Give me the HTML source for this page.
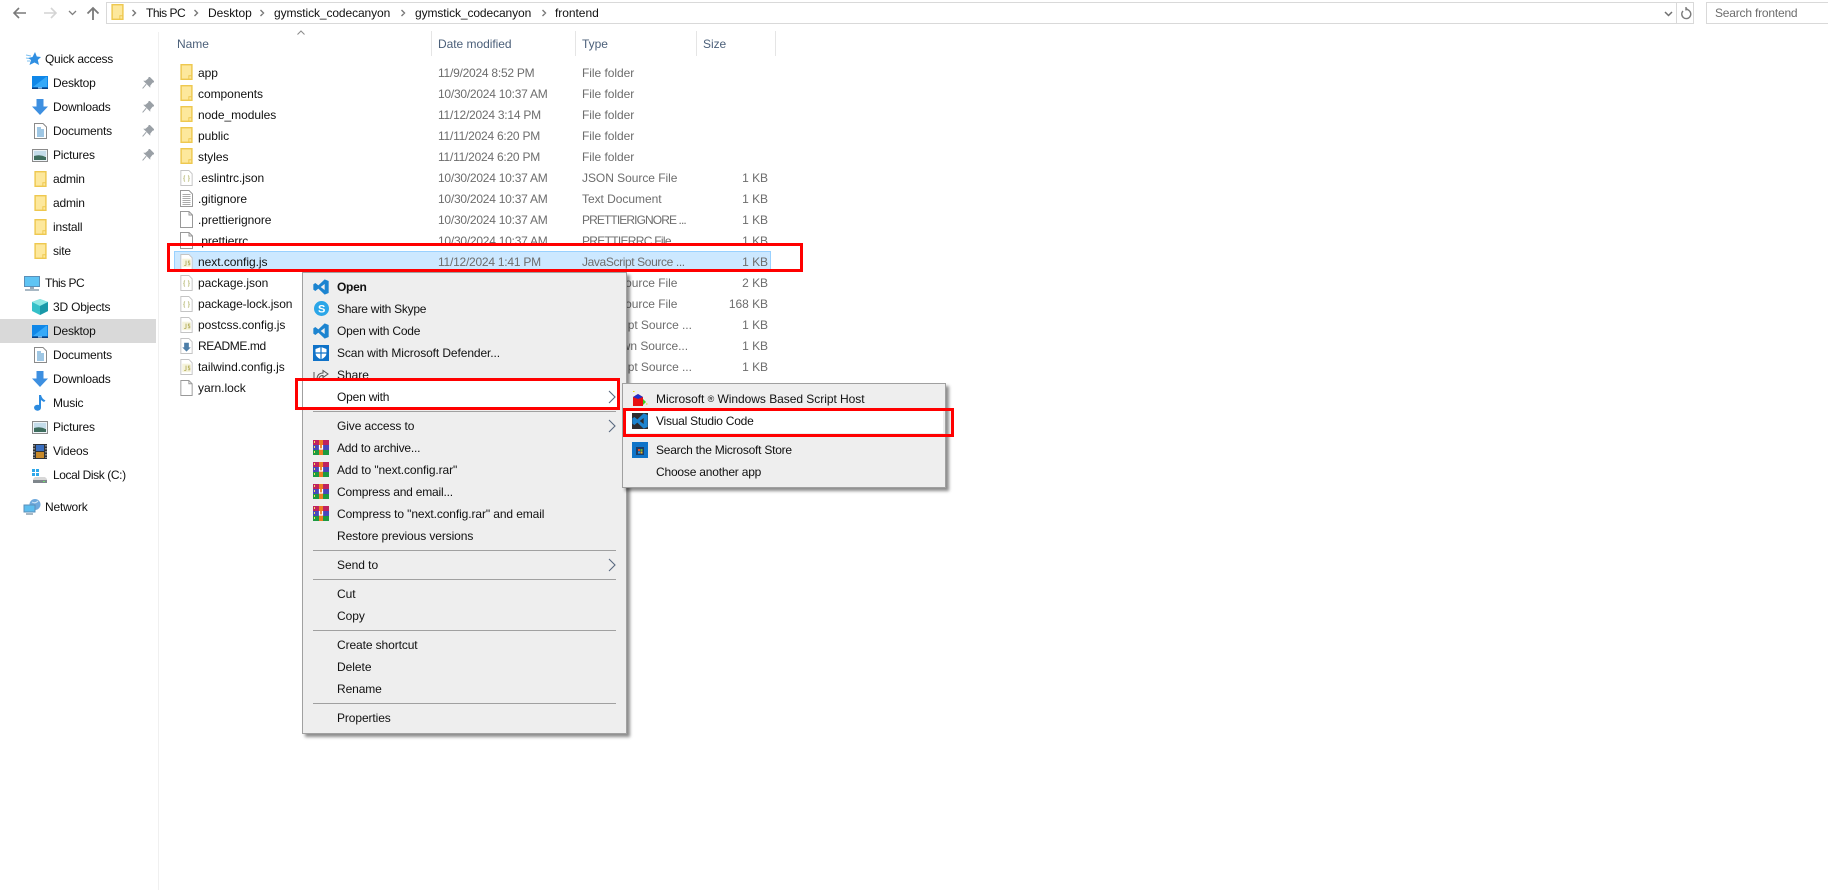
<!DOCTYPE html>
<html><head><meta charset="utf-8"><title>frontend</title>
<style>
html,body{margin:0;padding:0;background:#fff;}
#r{position:relative;width:1828px;height:890px;overflow:hidden;background:#fff;font:12px/20px "Liberation Sans",sans-serif;color:#111;}
#r>*{position:absolute;}
.t{position:absolute;white-space:nowrap;height:20px;line-height:20px;letter-spacing:-.04px;}
.g{color:#6d6d6d;}
.d{letter-spacing:-.24px;}
.s{color:#6d6d6d;text-align:right;width:60px;left:708px;}
.h{color:#4c607a;}
.n{letter-spacing:-.2px;}
.m{position:absolute;background:#eee;border:1px solid #a0a0a0;box-shadow:3px 3px 3px rgba(0,0,0,.45);}
.sep{position:absolute;height:1px;background:#a0a0a0;}
.red{position:absolute;box-sizing:border-box;border:3px solid #f00;}
svg{position:absolute;overflow:visible;}
</style></head><body><div id="r">
<svg width="0" height="0" style="left:0;top:0">
<defs>
<symbol id="folder" viewBox="0 0 13 17"><rect x=".75" y=".75" width="11.500" height="15.500" fill="#fde89c" stroke="#eec84f" stroke-width="1.500"/><path d="M9 16V12.500H12" fill="none" stroke="#eec84f"/></symbol>
<symbol id="file" viewBox="0 0 13 17"><path d="M.5.5H9L12.500 4V16.500H.5Z" fill="#fff" stroke="#999"/><path d="M9 .5V4H12.500" fill="none" stroke="#999"/></symbol>
<symbol id="json" viewBox="0 0 13 17"><path d="M.5.5H9L12.500 4V16.500H.5Z" fill="#fff" stroke="#c4c4c4"/><path d="M5 6Q4 6 4 7.500V8.500L3.500 9 4 9.500V11Q4 12 5 12M8 6Q9 6 9 7.500V8.500L9.500 9 9 9.500V11Q9 12 8 12" fill="none" stroke="#c2c48a"/></symbol>
<symbol id="js" viewBox="0 0 13 17"><path d="M.5.5H9L12.500 4V16.500H.5Z" fill="#fff" stroke="#c4c4c4"/><rect x="2" y="5" width="9" height="9" fill="#f5f3dc"/><path d="M6 7V11.500Q6 12.500 4 12M10.500 7.500H8.500V9.500H10V11.500H8" fill="none" stroke="#b8b060" stroke-width="1"/></symbol>
<symbol id="txt" viewBox="0 0 13 17"><path d="M.5.5H9L12.500 4V16.500H.5Z" fill="#fff" stroke="#999"/><path d="M2.500 4.500H10.500M2.500 6.500H10.500M2.500 8.500H10.500M2.500 10.500H10.500M2.500 12.500H10.500M2.500 14.500H10.500" stroke="#aaa"/></symbol>
<symbol id="md" viewBox="0 0 13 17"><path d="M.5.5H9L12.500 4V16.500H.5Z" fill="#fff" stroke="#c4c4c4"/><path d="M4 5H9V10L11 10 6.500 14.500 2 10H4Z" fill="#4d7ea8"/></symbol>
<symbol id="pin" viewBox="0 0 10 10"><path d="M6 0 10 4 8.500 4.500 6.500 7 6.500 8 2 3.500 3 3.500 5.500 1.500Z M3.500 6 .5 9.500" fill="#9aa0a6" stroke="#9aa0a6" stroke-width=".8"/></symbol>
<symbol id="desk" viewBox="0 0 16 14"><rect width="16" height="13" fill="#0f87e8"/><path d="M1 11 14 1H15V11Z" fill="#36a9f8"/><rect y="11.500" width="16" height="1.500" fill="#0b3f80"/><rect x="6" y="11.500" width="4" height="1" fill="#bfe0fb"/></symbol>
<symbol id="down" viewBox="0 0 16 16"><path d="M4.500 0H11.500V7.500H16L8 16 0 7.500H4.500Z" fill="#3d8fe0"/></symbol>
<symbol id="docs" viewBox="0 0 13 16"><path d="M.5.5H9L12.500 4V15.500H.5Z" fill="#fff" stroke="#8a8a8a"/><path d="M3 5H7M3 7H10M3 9H10M3 11H10M3 13H10" stroke="#3f8fc9"/></symbol>
<symbol id="pics" viewBox="0 0 16 13"><rect x=".5" y=".5" width="15" height="12" fill="#eef4f8" stroke="#8a8a8a"/><rect x="2" y="2" width="12" height="5" fill="#c4dcea"/><path d="M2 7Q8 5 14 8V11H2Z" fill="#3e6d5e"/></symbol>
<symbol id="vsc" viewBox="0 0 24 24"><path fill-rule="evenodd" d="M17.500.5 8 9.500 3.500 6 .5 8V16L3.500 18 8 14.500 17.500 23.500 23.500 21V3ZM17.500 7.500V16.500L11.500 12Z" fill="#1c84d0"/></symbol>
<symbol id="rar" viewBox="0 0 16 15"><rect width="16" height="5" fill="#c0225e"/><rect y="5" width="16" height="5" fill="#4847bb"/><rect y="10" width="16" height="5" fill="#1c9a40"/><rect x="6" width="4" height="15" fill="#ee7c22"/><rect x="1" y="1" width="1" height="2" fill="#f5e25a"/><rect x="1" y="6" width="1" height="2" fill="#f5e25a"/><rect x="1" y="11" width="1" height="2" fill="#f5e25a"/><path d="M6.500 5V9H9.500V5" fill="none" stroke="#fff" stroke-width="1.200"/></symbol>
</defs></svg>

<!-- toolbar -->
<svg style="left:12px;top:6px" width="16" height="14"><path d="M14 7H2M7 2 2 7 7 12" fill="none" stroke="#7a7a7a" stroke-width="1.600"/></svg>
<svg style="left:42px;top:6px" width="16" height="14"><path d="M2 7H14M9 2 14 7 9 12" fill="none" stroke="#d4d4d4" stroke-width="1.600"/></svg>
<svg style="left:68px;top:10px" width="10" height="6"><path d="M1 1 4.500 4.500 8 1" fill="none" stroke="#808080" stroke-width="1.300"/></svg>
<svg style="left:86px;top:6px" width="14" height="15"><path d="M7 14V2M1.500 7.500 7 2 12.500 7.500" fill="none" stroke="#7a7a7a" stroke-width="1.800"/></svg>
<div style="left:106px;top:2px;width:1588px;height:22px;box-sizing:border-box;border:1px solid #d9d9d9"></div>
<div style="left:1676px;top:3px;width:1px;height:20px;background:#d9d9d9"></div>
<svg style="left:111px;top:4px" width="13" height="16"><use href="#folder" width="13" height="16"/></svg>
<span class="t n" style="left:146px;top:3px;letter-spacing:-.5px">This PC</span>
<span class="t" style="left:208px;top:3px">Desktop</span>
<span class="t" style="left:274px;top:3px;letter-spacing:-.1px">gymstick_codecanyon</span>
<span class="t" style="left:415px;top:3px;letter-spacing:-.1px">gymstick_codecanyon</span>
<span class="t" style="left:555px;top:3px">frontend</span>
<svg style="left:0;top:0" width="600" height="26"><path d="M132.500 10 135.500 13 132.500 16M194.500 10 197.500 13 194.500 16M260.500 10 263.500 13 260.500 16M401.500 10 404.500 13 401.500 16M542.500 10 545.500 13 542.500 16" fill="none" stroke="#777" stroke-width="1.400"/></svg>
<svg style="left:1664px;top:11px" width="10" height="6"><path d="M1 1 4.500 4.500 8 1" fill="none" stroke="#707070" stroke-width="1.500"/></svg>
<svg style="left:1680px;top:6px" width="12" height="14"><path d="M3 5A4.500 4.500 0 1 0 9 4.500L6 2.500M6 1V4.500" fill="none" stroke="#7a7a7a" stroke-width="1.400"/></svg>
<div style="left:1706px;top:2px;width:130px;height:22px;box-sizing:border-box;border:1px solid #d9d9d9"></div>
<span class="t n" style="left:1715px;top:3px;color:#6d6d6d">Search frontend</span>

<!-- nav pane -->
<div style="left:158px;top:32px;width:1px;height:858px;background:#f0f0f0"></div>
<svg style="left:26px;top:52px" width="15" height="14"><path d="M9 0 10.800 4.500 15 5 11.800 8 13 13 8.500 10.500 3.500 13 5 8 2 6 6.500 5Z" fill="#2f8fe2"/><path d="M0 3 5 4M0 6 3 6.500M1 9 4 9" stroke="#7cc0f0"/></svg>
<span class="t n" style="left:45px;top:49px;letter-spacing:-.28px">Quick access</span>
<svg style="left:32px;top:76px" width="16" height="14"><use href="#desk" width="16" height="14"/></svg>
<span class="t n" style="left:53px;top:73px">Desktop</span>
<svg style="left:142px;top:77px" width="12" height="12"><use href="#pin" width="12" height="12"/></svg>
<svg style="left:32px;top:99px" width="16" height="16"><use href="#down" width="16" height="16"/></svg>
<span class="t n" style="left:53px;top:97px">Downloads</span>
<svg style="left:142px;top:101px" width="12" height="12"><use href="#pin" width="12" height="12"/></svg>
<svg style="left:34px;top:123px" width="13" height="16"><use href="#docs" width="13" height="16"/></svg>
<span class="t n" style="left:53px;top:121px">Documents</span>
<svg style="left:142px;top:125px" width="12" height="12"><use href="#pin" width="12" height="12"/></svg>
<svg style="left:32px;top:149px" width="16" height="13"><use href="#pics" width="16" height="13"/></svg>
<span class="t n" style="left:53px;top:145px">Pictures</span>
<svg style="left:142px;top:149px" width="12" height="12"><use href="#pin" width="12" height="12"/></svg>
<svg style="left:34px;top:171px" width="13" height="16"><use href="#folder" width="13" height="16"/></svg>
<span class="t n" style="left:53px;top:169px">admin</span>
<svg style="left:34px;top:195px" width="13" height="16"><use href="#folder" width="13" height="16"/></svg>
<span class="t n" style="left:53px;top:193px">admin</span>
<svg style="left:34px;top:219px" width="13" height="16"><use href="#folder" width="13" height="16"/></svg>
<span class="t n" style="left:53px;top:217px">install</span>
<svg style="left:34px;top:243px" width="13" height="16"><use href="#folder" width="13" height="16"/></svg>
<span class="t n" style="left:53px;top:241px">site</span>

<svg style="left:24px;top:276px" width="16" height="15"><rect x=".5" y=".5" width="15" height="10" fill="#5fc4f4" stroke="#5a8fb8"/><path d="M6 11H10V13H6Z" fill="#9ab"/><path d="M1 14H15" stroke="#8aa0b0" stroke-width="1.500"/></svg>
<span class="t n" style="left:45px;top:273px;letter-spacing:-.5px">This PC</span>
<svg style="left:32px;top:299px" width="16" height="16"><path d="M8 0 16 3 16 12 8 16 0 12 0 3Z" fill="#35c0c8"/><path d="M0 3 8 7 16 3 8 0Z" fill="#8ee8e4"/><path d="M8 7 16 3V12L8 16Z" fill="#1a98a8"/></svg>
<span class="t n" style="left:53px;top:297px">3D Objects</span>
<div style="left:0;top:319px;width:156px;height:24px;background:#d9d9d9"></div>
<svg style="left:32px;top:325px" width="16" height="14"><use href="#desk" width="16" height="14"/></svg>
<span class="t n" style="left:53px;top:321px">Desktop</span>
<svg style="left:34px;top:347px" width="13" height="16"><use href="#docs" width="13" height="16"/></svg>
<span class="t n" style="left:53px;top:345px">Documents</span>
<svg style="left:32px;top:371px" width="16" height="16"><use href="#down" width="16" height="16"/></svg>
<span class="t n" style="left:53px;top:369px">Downloads</span>
<svg style="left:34px;top:395px" width="12" height="16"><path d="M5 0H7Q8 4 11.500 5.500L10 7Q8 6 7 5V12.500A3.500 3 0 1 1 5 10Z" fill="#2c8be0"/></svg>
<span class="t n" style="left:53px;top:393px">Music</span>
<svg style="left:32px;top:421px" width="16" height="13"><use href="#pics" width="16" height="13"/></svg>
<span class="t n" style="left:53px;top:417px">Pictures</span>
<svg style="left:33px;top:444px" width="14" height="15"><rect width="14" height="15" fill="#2f3338"/><rect x="3" y="1" width="8" height="6" fill="#3a6fc0"/><rect x="3" y="8" width="8" height="6" fill="#c88a2a"/><path d="M1 1V14M13 1V14" stroke="#ddd" stroke-dasharray="1.500 1.500"/></svg>
<span class="t n" style="left:53px;top:441px">Videos</span>
<svg style="left:32px;top:469px" width="16" height="14"><rect x="0" y="0" width="3" height="3" fill="#2ea8ea"/><rect x="4" y="0" width="3" height="3" fill="#2ea8ea"/><rect x="0" y="4" width="3" height="3" fill="#2ea8ea"/><rect x="4" y="4" width="3" height="3" fill="#2ea8ea"/><path d="M3 8H13L15 10V14H1V10Z" fill="#d8d8d8"/><rect x="1" y="11" width="14" height="3" fill="#7f868c"/><rect x="11" y="12" width="2" height="1" fill="#6fe26f"/></svg>
<span class="t n" style="left:53px;top:465px;letter-spacing:-.4px">Local Disk (C:)</span>
<svg style="left:24px;top:499px" width="17" height="16"><circle cx="11" cy="5.500" r="5.500" fill="#6fa9dc"/><path d="M8 3Q11 5 14 2" stroke="#cfe6f5" fill="none"/><rect x="0" y="6" width="11" height="7" fill="#5dbdee" stroke="#5a8fb8"/><path d="M2 15H9" stroke="#8aa0b0" stroke-width="1.500"/></svg>
<span class="t n" style="left:45px;top:497px">Network</span>

<!-- headers -->
<svg style="left:297px;top:30px" width="9" height="6"><path d="M.5 4.500 4 1 7.500 4.500" fill="none" stroke="#8a8a8a"/></svg>
<span class="t h" style="left:177px;top:34px">Name</span>
<span class="t h" style="left:438px;top:34px">Date modified</span>
<span class="t h" style="left:582px;top:34px">Type</span>
<span class="t h" style="left:703px;top:34px">Size</span>
<div style="left:431px;top:31px;width:1px;height:25px;background:#e5e5e5"></div>
<div style="left:575px;top:31px;width:1px;height:25px;background:#e5e5e5"></div>
<div style="left:696px;top:31px;width:1px;height:25px;background:#e5e5e5"></div>
<div style="left:775px;top:31px;width:1px;height:25px;background:#e5e5e5"></div>

<!-- rows -->
<svg style="left:180px;top:64px" width="13" height="16"><use href="#folder" width="13" height="16"/></svg>
<span class="t" style="left:198px;top:63px">app</span><span class="t g d" style="left:438px;top:63px">11/9/2024 8:52 PM</span><span class="t g" style="left:582px;top:63px">File folder</span>
<svg style="left:180px;top:85px" width="13" height="16"><use href="#folder" width="13" height="16"/></svg>
<span class="t" style="left:198px;top:84px">components</span><span class="t g d" style="left:438px;top:84px">10/30/2024 10:37 AM</span><span class="t g" style="left:582px;top:84px">File folder</span>
<svg style="left:180px;top:106px" width="13" height="16"><use href="#folder" width="13" height="16"/></svg>
<span class="t" style="left:198px;top:105px">node_modules</span><span class="t g d" style="left:438px;top:105px">11/12/2024 3:14 PM</span><span class="t g" style="left:582px;top:105px">File folder</span>
<svg style="left:180px;top:127px" width="13" height="16"><use href="#folder" width="13" height="16"/></svg>
<span class="t" style="left:198px;top:126px">public</span><span class="t g d" style="left:438px;top:126px">11/11/2024 6:20 PM</span><span class="t g" style="left:582px;top:126px">File folder</span>
<svg style="left:180px;top:148px" width="13" height="16"><use href="#folder" width="13" height="16"/></svg>
<span class="t" style="left:198px;top:147px">styles</span><span class="t g d" style="left:438px;top:147px">11/11/2024 6:20 PM</span><span class="t g" style="left:582px;top:147px">File folder</span>
<svg style="left:180px;top:170px" width="13" height="16"><use href="#json" width="13" height="16"/></svg>
<span class="t" style="left:198px;top:168px">.eslintrc.json</span><span class="t g d" style="left:438px;top:168px">10/30/2024 10:37 AM</span><span class="t g" style="left:582px;top:168px">JSON Source File</span><span class="t s" style="top:168px">1 KB</span>
<svg style="left:180px;top:190px" width="13" height="17"><use href="#txt" width="13" height="17"/></svg>
<span class="t" style="left:198px;top:189px">.gitignore</span><span class="t g d" style="left:438px;top:189px">10/30/2024 10:37 AM</span><span class="t g" style="left:582px;top:189px">Text Document</span><span class="t s" style="top:189px">1 KB</span>
<svg style="left:180px;top:211px" width="13" height="17"><use href="#file" width="13" height="17"/></svg>
<span class="t" style="left:198px;top:210px">.prettierignore</span><span class="t g d" style="left:438px;top:210px">10/30/2024 10:37 AM</span><span class="t g" style="left:582px;top:210px;letter-spacing:-.9px">PRETTIERIGNORE ...</span><span class="t s" style="top:210px">1 KB</span>
<svg style="left:180px;top:232px" width="13" height="17"><use href="#file" width="13" height="17"/></svg>
<span class="t" style="left:198px;top:231px">.prettierrc</span><span class="t g d" style="left:438px;top:231px">10/30/2024 10:37 AM</span><span class="t g" style="left:582px;top:231px;letter-spacing:-.7px">PRETTIERRC File</span><span class="t s" style="top:231px">1 KB</span>

<div style="left:174px;top:251px;width:597px;height:21px;box-sizing:border-box;background:#cce8ff;border:1px solid #99d1ff"></div>
<svg style="left:180px;top:254px" width="13" height="16"><use href="#js" width="13" height="16"/></svg>
<span class="t" style="left:198px;top:252px">next.config.js</span><span class="t g d" style="left:438px;top:252px">11/12/2024 1:41 PM</span><span class="t g" style="left:582px;top:252px;letter-spacing:-.38px">JavaScript Source ...</span><span class="t s" style="top:252px">1 KB</span>

<svg style="left:180px;top:275px" width="13" height="16"><use href="#json" width="13" height="16"/></svg>
<span class="t" style="left:198px;top:273px">package.json</span><span class="t g" style="left:582px;top:273px">JSON Source File</span><span class="t s" style="top:273px">2 KB</span>
<svg style="left:180px;top:296px" width="13" height="16"><use href="#json" width="13" height="16"/></svg>
<span class="t" style="left:198px;top:294px;letter-spacing:-.1px">package-lock.json</span><span class="t g" style="left:582px;top:294px">JSON Source File</span><span class="t s" style="top:294px">168 KB</span>
<svg style="left:180px;top:317px" width="13" height="16"><use href="#js" width="13" height="16"/></svg>
<span class="t" style="left:198px;top:315px">postcss.config.js</span><span class="t g" style="left:582px;top:315px">JavaScript Source ...</span><span class="t s" style="top:315px">1 KB</span>
<svg style="left:180px;top:338px" width="13" height="16"><use href="#md" width="13" height="16"/></svg>
<span class="t" style="left:198px;top:336px;letter-spacing:-.4px">README.md</span><span class="t g" style="left:582px;top:336px">Markdown Source...</span><span class="t s" style="top:336px">1 KB</span>
<svg style="left:180px;top:359px" width="13" height="16"><use href="#js" width="13" height="16"/></svg>
<span class="t" style="left:198px;top:357px">tailwind.config.js</span><span class="t g" style="left:582px;top:357px">JavaScript Source ...</span><span class="t s" style="top:357px">1 KB</span>
<svg style="left:180px;top:380px" width="13" height="16"><use href="#file" width="13" height="16"/></svg>
<span class="t" style="left:198px;top:378px">yarn.lock</span>

<!-- context menu -->
<div class="m" style="left:302px;top:272px;width:323px;height:460px"></div>
<svg style="left:313px;top:279px" width="16" height="16"><use href="#vsc" width="16" height="16"/></svg>
<span class="t" style="left:337px;top:277px;font-weight:bold;letter-spacing:-.3px">Open</span>
<svg style="left:314px;top:301px" width="15" height="15"><circle cx="7.500" cy="7.500" r="7.500" fill="#2ba6e8"/><text x="4" y="11.500" font-family="Liberation Sans" font-size="11" font-weight="bold" fill="#fff">S</text></svg>
<span class="t" style="left:337px;top:299px;letter-spacing:-.26px">Share with Skype</span>
<svg style="left:313px;top:323px" width="16" height="16"><use href="#vsc" width="16" height="16"/></svg>
<span class="t" style="left:337px;top:321px;letter-spacing:-.2px">Open with Code</span>
<svg style="left:313px;top:345px" width="16" height="16"><rect width="16" height="16" fill="#0f72c8"/><path d="M8 2 13.500 4V8Q13.500 12 8 14.500 2.500 12 2.500 8V4Z" fill="#fff"/><path d="M8 2V14.500M2.500 8H13.500" stroke="#0f72c8" stroke-width="1.200"/></svg>
<span class="t" style="left:337px;top:343px;letter-spacing:-.1px">Scan with Microsoft Defender...</span>
<svg style="left:313px;top:369px" width="16" height="12"><path d="M1 3V9M4 9Q5 4 10 4V1.500L15 5 10 8.500V6.500Q7 6.500 6 9" fill="none" stroke="#555" stroke-width="1"/></svg>
<span class="t" style="left:337px;top:365px">Share</span>

<div style="left:303px;top:381px;width:316px;height:27px;background:#fff"></div>
<span class="t" style="left:337px;top:387px;letter-spacing:-.2px">Open with</span>
<svg style="left:608px;top:390px" width="8" height="14"><path d="M1 1 7 7 1 13" fill="none" stroke="#5a6a80" stroke-width="1.100"/></svg>
<div class="sep" style="left:313px;top:411px;width:303px"></div>
<span class="t" style="left:337px;top:416px;letter-spacing:-.1px">Give access to</span>
<svg style="left:608px;top:419px" width="8" height="14"><path d="M1 1 7 7 1 13" fill="none" stroke="#5a6a80" stroke-width="1.100"/></svg>
<svg style="left:313px;top:440px" width="16" height="15"><use href="#rar" width="16" height="15"/></svg>
<span class="t" style="left:337px;top:438px;letter-spacing:-.2px">Add to archive...</span>
<svg style="left:313px;top:462px" width="16" height="15"><use href="#rar" width="16" height="15"/></svg>
<span class="t" style="left:337px;top:460px;letter-spacing:-.1px">Add to "next.config.rar"</span>
<svg style="left:313px;top:484px" width="16" height="15"><use href="#rar" width="16" height="15"/></svg>
<span class="t" style="left:337px;top:482px;letter-spacing:-.2px">Compress and email...</span>
<svg style="left:313px;top:506px" width="16" height="15"><use href="#rar" width="16" height="15"/></svg>
<span class="t" style="left:337px;top:504px;letter-spacing:-.1px">Compress to "next.config.rar" and email</span>
<span class="t" style="left:337px;top:526px;letter-spacing:-.1px">Restore previous versions</span>
<div class="sep" style="left:313px;top:550px;width:303px"></div>
<span class="t" style="left:337px;top:555px">Send to</span>
<svg style="left:608px;top:558px" width="8" height="14"><path d="M1 1 7 7 1 13" fill="none" stroke="#5a6a80" stroke-width="1.100"/></svg>
<div class="sep" style="left:313px;top:579px;width:303px"></div>
<span class="t" style="left:337px;top:584px">Cut</span>
<span class="t" style="left:337px;top:606px">Copy</span>
<div class="sep" style="left:313px;top:630px;width:303px"></div>
<span class="t" style="left:337px;top:635px;letter-spacing:-.1px">Create shortcut</span>
<span class="t" style="left:337px;top:657px">Delete</span>
<span class="t" style="left:337px;top:679px;letter-spacing:-.1px">Rename</span>
<div class="sep" style="left:313px;top:703px;width:303px"></div>
<span class="t" style="left:337px;top:708px;letter-spacing:-.1px">Properties</span>

<!-- submenu -->
<div class="m" style="left:622px;top:383px;width:322px;height:103px"></div>
<svg style="left:632px;top:391px" width="16" height="16"><path d="M1 0.500H2.500M14 13H15.500" stroke="#e6d800"/><path d="M1 6 6 3 11 6V15H1Z" fill="#e81010"/><path d="M1 6 6 3 11 6 6 8Z" fill="#2030c8"/><path d="M11 8 14 11 11 14Z" fill="#38d020"/></svg>
<span class="t" style="left:656px;top:389px">Microsoft <span style="font-size:9px;vertical-align:1px">&#174;</span> Windows Based Script Host</span>
<div style="left:626px;top:411px;width:317px;height:22px;background:#fff"></div>
<svg style="left:632px;top:413px" width="16" height="16"><rect width="16" height="16" fill="#2d2d30"/><use href="#vsc" width="16" height="16"/></svg>
<span class="t" style="left:656px;top:411px;letter-spacing:-.24px">Visual Studio Code</span>
<svg style="left:632px;top:442px" width="16" height="16"><rect width="16" height="16" fill="#0f74c8"/><path d="M4 5H12V13H4Z" fill="#1c3d66"/><rect x="6" y="7" width="2" height="2" fill="#e8502a"/><rect x="8.500" y="7" width="2" height="2" fill="#6ab82c"/><rect x="6" y="9.500" width="2" height="2" fill="#2a9ae8"/><rect x="8.500" y="9.500" width="2" height="2" fill="#f2b91e"/></svg>
<span class="t" style="left:656px;top:440px;letter-spacing:-.24px">Search the Microsoft Store</span>
<span class="t" style="left:656px;top:462px;letter-spacing:-.2px">Choose another app</span>

<!-- red annotations -->
<div class="red" style="left:167px;top:243px;width:636px;height:29px"></div>
<div class="red" style="left:295px;top:378px;width:325px;height:32px"></div>
<div class="red" style="left:623px;top:408px;width:331px;height:29px"></div>
</div></body></html>
